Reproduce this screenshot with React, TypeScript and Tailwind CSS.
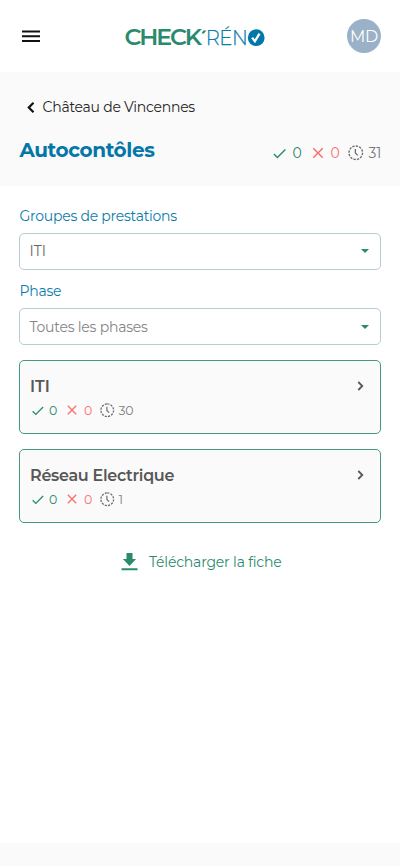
import React from "react";

function Logo() {
  return (
    <svg width="144" height="32" viewBox="-2 -4 144 32" role="img" aria-label="Check'Réno">
      <g fontFamily="Montserrat, Inter, sans-serif">
        <text x="-.6" y="19.2" fontSize="21.3" fontWeight="600" fill="#2b8a6e" letterSpacing="-1.9" textLength="75.5" lengthAdjust="spacingAndGlyphs">CHECK</text>
        <text x="80.8" y="19.2" fontSize="21.3" fontWeight="300" fill="#0a7cab" stroke="#0a7cab" strokeWidth=".25" letterSpacing="-.5" textLength="41.5" lengthAdjust="spacingAndGlyphs">RÉN</text>
      </g>
      <path d="M76.5 7.5 78.3 4.6h3.2L78.8 7.5z" fill="#2b8a6e" />
      <circle cx="131.2" cy="11.7" r="8.4" fill="#0277a8" />
      <path d="m127.1 11.6 2.8 3.7 4.6-7.6" fill="none" stroke="#fff" strokeWidth="2.3" />
    </svg>
  );
}

function CheckIcon({ size }: { size: number }) {
  return (
    <svg width={size} height={size} viewBox="0 0 24 24" fill="#2b8a6e">
      <path d="M9 16.17 4.83 12l-1.42 1.41L9 19 21 7l-1.41-1.41z" />
    </svg>
  );
}

function CrossIcon({ size }: { size: number }) {
  return (
    <svg width={size} height={size} viewBox="0 0 24 24" fill="#f87171">
      <path d="M19 6.41 17.59 5 12 10.59 6.41 5 5 6.41 10.59 12 5 17.59 6.41 19 12 13.41 17.59 19 19 17.59 13.41 12z" />
    </svg>
  );
}

function PendingIcon({ size }: { size: number }) {
  return (
    <svg width={size} height={size} viewBox="0 0 16 16" fill="none" stroke="#6c6c6c" strokeWidth="1.4">
      <path d="M8 1A7 7 0 0 1 8 15A7 7 0 0 1 8 1" pathLength="36" strokeDasharray="2 1" />
      <path d="M7.6 4v4.2l2.4 2.5" strokeWidth="1.3" />
    </svg>
  );
}

function Caret() {
  return (
    <svg width="8" height="4" viewBox="0 0 8 4" fill="#2b8a6e">
      <path d="M0 0h8L4 4z" />
    </svg>
  );
}

function Select({ label, value, tone }: { label: string; value: string; tone: string }) {
  return (
    <div className="h-[75.5px]">
      <div className="h-[22px] pl-[.5px] text-[14px] leading-[23px] tracking-[-0.25px] text-[#0a7cab]">{label}</div>
      <button className="mt-[6.25px] flex h-[37px] w-full items-center justify-between rounded-[5px] border border-[#b3ced0] pr-[11px] pl-[9.5px] text-left">
        <span className={`pt-px text-[14px] ${tone}`}>{value}</span>
        <Caret />
      </button>
    </div>
  );
}

function Card({ title, pending, titleClass }: { title: string; pending: string; titleClass: string }) {
  return (
    <div className="h-[74px] rounded-[5px] border border-[#449a80] bg-[#fafafa] pt-[14px] pr-[16px] pl-[10px]">
      <div className="flex h-[23px] items-center justify-between">
        <span className={`pt-[2px] text-[16px] font-semibold text-[#575757] ${titleClass}`}>{title}</span>
        <svg width="7" height="10" viewBox="0 0 7 10" fill="none" stroke="#575757" strokeWidth="1.8">
          <path d="m1.3 1 4 4-4 4" />
        </svg>
      </div>
      <div className="flex h-[25px] items-center text-[12.5px]">
        <CheckIcon size={15.5} />
        <span className="ml-[3.5px] w-[15px] pt-[2px] text-[#2b8a6e]">0</span>
        <CrossIcon size={16} />
        <span className="ml-[4px] w-[16px] pt-[2px] text-[#f87171]">0</span>
        <PendingIcon size={14.5} />
        <span className="ml-[4px] pt-[2px] tracking-[-0.2px] text-[#808080]">{pending}</span>
      </div>
    </div>
  );
}

export default function App() {
  return (
    <div className="flex h-[866px] w-[400px] flex-col bg-white font-['Montserrat','Inter',sans-serif]">
      <header className="flex h-[72px] items-center justify-between pr-[19px] pl-[22px]">
        <svg width="18" height="13" viewBox="0 0 18 13" fill="#111">
          <path d="M0 .5h18v2H0zM0 5.3h18v2H0zM0 10.1h18v2H0z" />
        </svg>
        <div className="mt-[3px] ml-[83px]"><Logo /></div>
        <div className="ml-auto flex size-[34px] items-center justify-center rounded-full bg-[#9ab1c7] pt-px text-[16px] tracking-[-0.3px] text-white">MD</div>
      </header>
      <section className="h-[114px] bg-[#fafafa] pt-[25px] pr-[19px] pl-[19px]">
        <div className="flex h-5 items-center pl-[8px]">
          <svg width="8" height="11" viewBox="0 0 8 11" fill="none" stroke="#111" strokeWidth="2.2">
            <path d="M6.5.8 1.8 5.5l4.7 4.7" />
          </svg>
          <span className="ml-[7.5px] text-[14px] tracking-[-0.25px] text-[#242424]">Château de Vincennes</span>
        </div>
        <div className="mt-[18px] flex items-center justify-between">
          <h1 className="h-[30px] pl-[.5px] text-[20px] leading-[30px] font-bold tracking-[-0.4px] text-[#0277a8]">Autocontôles</h1>
          <div className="mt-[6px] flex items-center text-[14px]">
            <CheckIcon size={17} />
            <span className="ml-[4px] w-[17px] text-[#2b8a6e]">0</span>
            <CrossIcon size={18} />
            <span className="ml-[3px] w-[18px] text-[#f87171]">0</span>
            <PendingIcon size={15.5} />
            <span className="ml-[4.5px] tracking-[-0.2px] text-[#777]">31</span>
          </div>
        </div>
      </section>
      <main className="flex-1 px-[19px] pt-[18.5px]">
        <Select label="Groupes de prestations" value="ITI" tone="text-[#666]" />
        <Select label="Phase" value="Toutes les phases" tone="text-[#858585] tracking-[-0.22px]" />
        <div className="mt-[4.25px] flex flex-col gap-[15px]">
          <Card title="ITI" pending="30" titleClass="" />
          <Card title="Réseau Electrique" pending="1" titleClass="tracking-[-0.3px]" />
        </div>
        <button className="mt-[26.75px] ml-[102px] flex h-6 items-center">
          <svg width="17" height="18" viewBox="0 0 17 18" fill="#2b8a6e">
            <path d="M5.5 0h6v6h3.6L8.5 13 1.9 6h3.6zM.5 15.3h16v2H.5z" />
          </svg>
          <span className="ml-[11px] pt-px text-[14px] tracking-[-0.18px] text-[#2b8a6e]">Télécharger la fiche</span>
        </button>
      </main>
      <footer className="h-[23px] bg-[#fafafa]" />
    </div>
  );
}
